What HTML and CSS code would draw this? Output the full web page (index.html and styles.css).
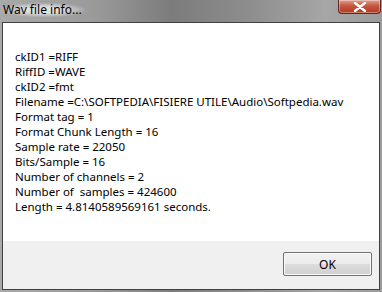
FILE: index.html
```html
<!DOCTYPE html>
<html lang="en">
<head>
  <meta charset="UTF-8" />
  <title>Wav file info...</title>
  <link rel="stylesheet" href="styles.css">
</head>
<body>
  <div class="window">
    <div class="titlebar">
      <span class="title">Wav file info...</span>
      <button class="close" type="button" aria-label="Close">
        <svg width="14" height="10" viewBox="0 0 14 10"><path d="M2 1 L12 9 M12 1 L2 9" stroke="#fff" stroke-width="2.4" stroke-linecap="round"/></svg>
      </button>
    </div>
    <div class="client">
      <div class="info">
        <div>ckID1 =RIFF</div>
        <div>RiffID =WAVE</div>
        <div>ckID2 =fmt</div>
        <div>Filename =C:\SOFTPEDIA\FISIERE UTILE\Audio\Softpedia.wav</div>
        <div>Format tag = 1</div>
        <div>Format Chunk Length = 16</div>
        <div>Sample rate = 22050</div>
        <div>Bits/Sample = 16</div>
        <div>Number of channels = 2</div>
        <div>Number of &nbsp;samples = 424600</div>
        <div>Length = 4.8140589569161 seconds.</div>
      </div>
      <div class="buttons">
        <button class="ok" type="button">OK</button>
      </div>
    </div>
  </div>
</body>
</html>
```

FILE: styles.css
```css
body { margin: 0; font-family: "Noto Sans", "Open Sans", sans-serif; font-size: 11.5px; }
.window { width: 382px; height: 292px; box-sizing: border-box; padding: 0 2px 2px 2px;
  background: linear-gradient(90deg, #a9a9a9 0%, #9a9a9a 25%, #7c7c7c 45%, #8d8d8d 65%, #a6a6a6 85%, #9c9c9c 100%);
  display: flex; flex-direction: column; }
.titlebar { height: 22px; display: flex; align-items: flex-start; justify-content: space-between; }
.title { margin: 3px 0 0 0; padding: 0 3px 0 1px; line-height: 14px; font-size: 12px; color: #000;
  background: radial-gradient(ellipse at center, rgba(235,235,235,0.85) 30%, rgba(235,235,235,0) 75%); }
.close { width: 43px; height: 14px; margin: 0 -1px 0 0; padding: 0; border: 1px solid #5a2a22; border-top: 0;
  border-radius: 0 0 4px 4px; background: linear-gradient(#e4a08f, #c6563e 45%, #b13a22 100%);
  display: flex; align-items: center; justify-content: center; box-shadow: inset 0 0 0 1px rgba(255,255,255,0.35); }
.client { flex: 1; border: 1px solid #404040; display: flex; flex-direction: column; background: #fff; }
.info { height: 218px; padding: 26px 0 0 12px; box-sizing: border-box; line-height: 15px; color: #000; }
.buttons { flex: 1; background: #f0f0f0; display: flex; justify-content: flex-end; align-items: flex-start; padding: 11px 7px 0 0; }
.ok { width: 89px; height: 24px; font: inherit; font-size: 12px; color: #000; border: 1px solid #707070; border-radius: 2px;
  background: linear-gradient(#f2f2f2, #ebebeb 50%, #dddddd 51%, #cfcfcf); box-shadow: inset 0 0 0 1px #fcfcfc; }
```
